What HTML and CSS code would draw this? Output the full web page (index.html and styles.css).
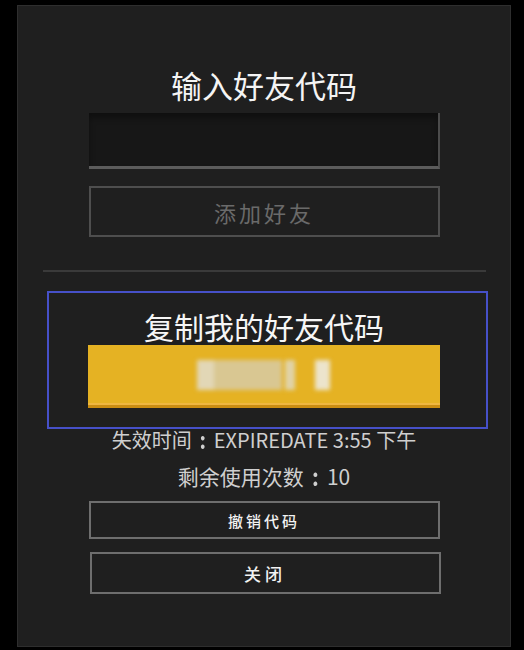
FILE: index.html
```html
<!DOCTYPE html>
<html lang="zh-CN">
<head>
<meta charset="utf-8">
<link rel="stylesheet" href="styles.css">
</head>
<body>
<div class="panel">
  <div class="title">输入好友代码</div>
  <div class="input"></div>
  <div class="btn-add">添加好友</div>
  <div class="sep"></div>
  <div class="focus">
    <div class="title2">复制我的好友代码</div>
    <div class="code-btn">
      <div class="code-blur">
        <span class="b1"></span><span class="b2"></span><span class="b3"></span><span class="b4"></span>
      </div>
    </div>
  </div>
  <div class="info first">失效时间<span class="colon">:</span>EXPIREDATE 3:55 下午</div>
  <div class="info second">剩余使用次数<span class="colon">:</span>10</div>
  <div class="btn revoke">撤销代码</div>
  <div class="btn close">关闭</div>
</div>
</body>
</html>
```
FILE: styles.css
```css
html, body {
  margin: 0;
  padding: 0;
  background: #000;
}
body {
  width: 524px;
  height: 650px;
  overflow: hidden;
  font-family: "Noto Sans CJK SC", "Open Sans", sans-serif;
}
.panel {
  box-sizing: border-box;
  width: 494px;
  height: 642px;
  margin: 5px 0 0 17px;
  background: #1f1f1f;
  border: 1px solid #2e2e2e;
  display: flex;
  flex-direction: column;
  align-items: center;
}
.title {
  margin-top: 59px;
  font-size: 31px;
  line-height: 40px;
  color: #f4f4f4;
}
.input {
  box-sizing: border-box;
  margin-top: 8px;
  width: 351px;
  height: 56px;
  background: #171717;
  border-right: 2px solid #4c4c4c;
  border-bottom: 3px solid #5c5c5c;
  box-shadow: inset 0 5px 6px rgba(0,0,0,0.35);
}
.btn-add {
  box-sizing: border-box;
  margin-top: 17px;
  width: 351px;
  height: 51px;
  border: 2px solid #4e4e4e;
  color: #6a6a6a;
  font-size: 22px;
  letter-spacing: 3px;
  display: flex;
  align-items: center;
  justify-content: center;
}
.sep {
  margin-top: 33px;
  width: 443px;
  height: 2px;
  background: #3a3a3a;
}
.focus {
  box-sizing: border-box;
  margin-top: 19px;
  margin-left: 6px;
  width: 441px;
  height: 138px;
  border: 2px solid #4650c8;
  display: flex;
  flex-direction: column;
  align-items: center;
  padding-right: 6px;
}
.title2 {
  margin-top: 15px;
  font-size: 30px;
  line-height: 37px;
  color: #f6f6f6;
}
.code-btn {
  box-sizing: border-box;
  width: 352px;
  height: 63px;
  background: #e5b223;
  border-bottom: 3px solid #c98c12;
  box-shadow: inset 0 -2px 0 #eeb640;
  display: flex;
  align-items: center;
  justify-content: center;
}
.code-blur {
  display: flex;
  align-items: center;
  filter: blur(2px);
  margin-left: -2px;
}
.code-blur span {
  display: block;
  height: 30px;
}
.b1 { width: 17px; background: #e2d7b6; }
.b2 { width: 68px; background: #d9c792; }
.b3 { width: 10px; background: #e0d3a8; margin-left: 3px; }
.b4 { width: 15px; background: #ece4cc; margin-left: 20px; }
.info {
  line-height: 26px;
  color: #cfcfcf;
}
.colon {
  display: inline-block;
  width: 1.1em;
  text-align: center;
  font-weight: bold;
  transform: scaleY(1.15);
}
.info.first { margin-top: -2px; font-size: 20px; }
.info.second { margin-top: 10px; font-size: 21px; }
.btn {
  box-sizing: border-box;
  width: 351px;
  border: 2px solid #6e6e6e;
  color: #f2f2f2;
  font-weight: 500;
  display: flex;
  align-items: center;
  justify-content: center;
}
.revoke {
  margin-top: 12px;
  height: 38px;
  font-size: 15px;
  letter-spacing: 3px;
}
.close {
  margin-top: 13px;
  margin-left: 2px;
  height: 42px;
  font-size: 17px;
  letter-spacing: 4px;
}
```
